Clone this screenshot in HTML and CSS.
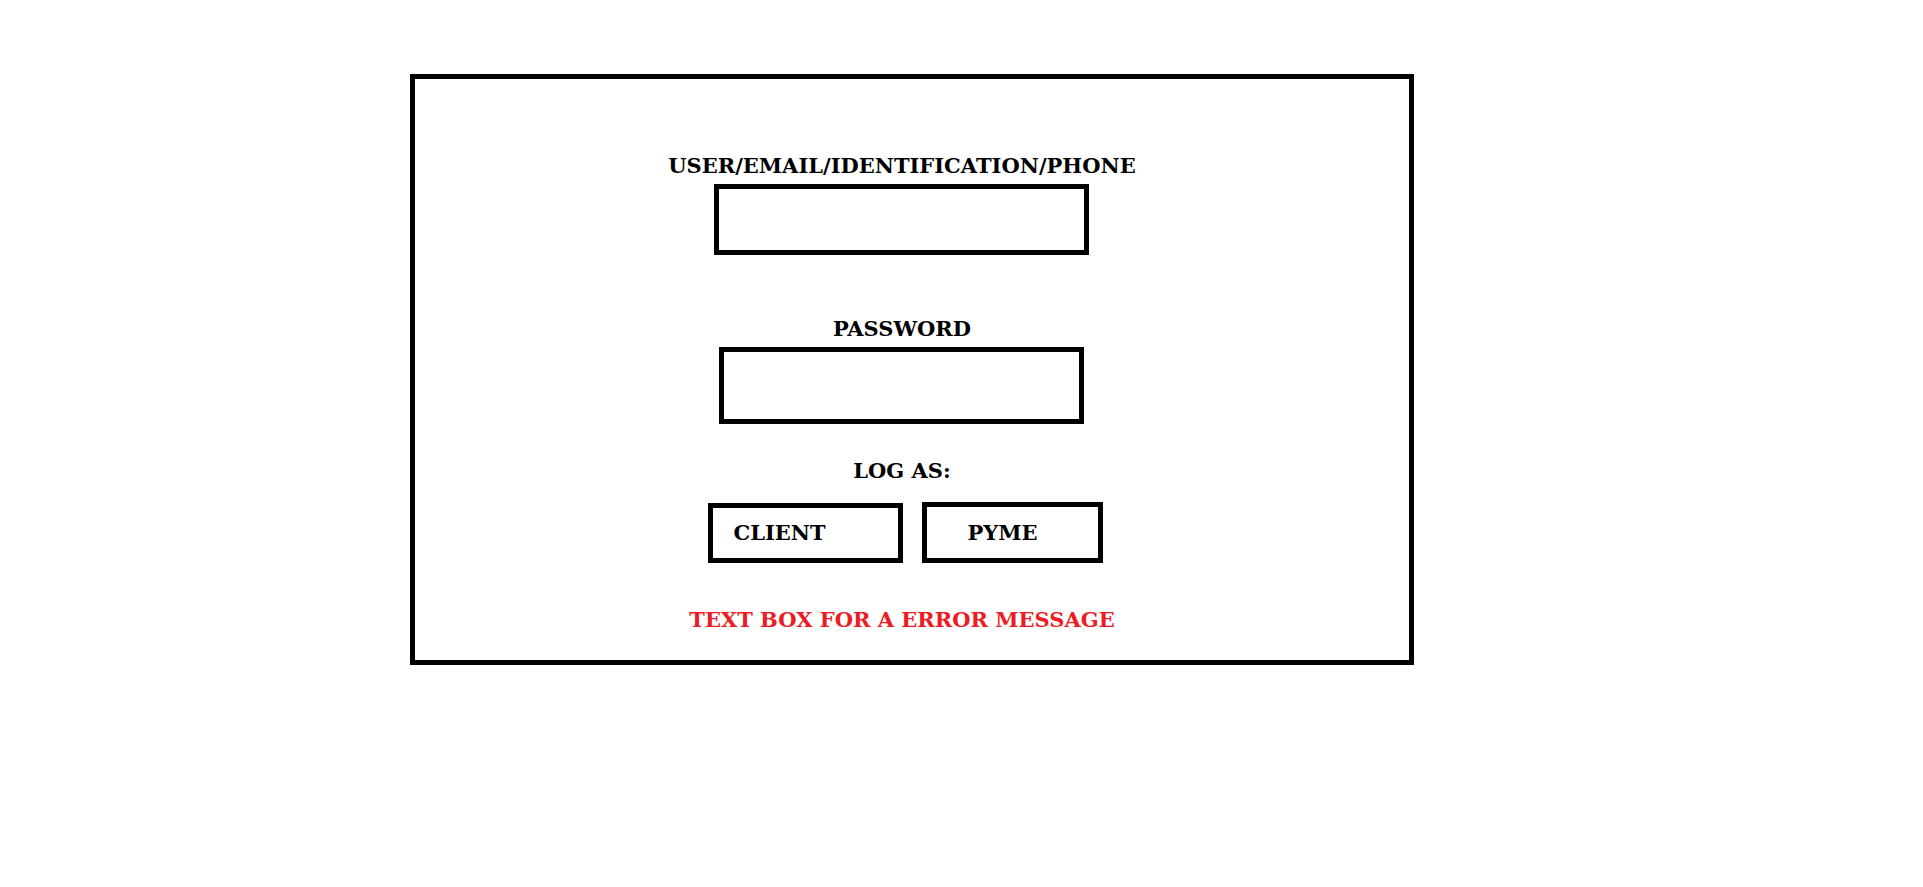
FILE: index.html
```html
<!DOCTYPE html>
<html lang="en">
<head>
<meta charset="utf-8">
<title>Log in</title>
<link rel="stylesheet" href="styles.css">
</head>
<body>
<main class="panel">
  <form class="login">
    <div class="field">
      <label for="user">USER/EMAIL/IDENTIFICATION/PHONE</label>
      <input class="box user" id="user" type="text">
    </div>
    <div class="field">
      <label for="password">PASSWORD</label>
      <input class="box password" id="password" type="password">
    </div>
    <p class="caption">LOG AS:</p>
    <div class="roles">
      <button class="box client" type="button">CLIENT</button>
      <button class="box pyme" type="button">PYME</button>
    </div>
    <p class="error" role="alert">TEXT BOX FOR A ERROR MESSAGE</p>
  </form>
</main>
</body>
</html>
```
FILE: styles.css
```css
* {
  box-sizing: border-box;
}

body {
  margin: 0;
  background: #fff;
  color: #000;
  font: bold 21px/24px "DejaVu Serif", serif;
}

.panel {
  width: 52.25%;
  min-width: 600px;
  margin: 74px 0 0 21.3%;
  padding: 75px 20px 28px 0;
  border: 5px solid #000;
}

.login {
  display: flex;
  flex-direction: column;
  align-items: center;
}

.field {
  display: flex;
  flex-direction: column;
  align-items: center;
  gap: 6px;
  margin-bottom: 62px;
}

.field + .field {
  margin-bottom: 35px;
}

.box {
  border: 5px solid #000;
  border-radius: 0;
  background: #fff;
  color: inherit;
  font: inherit;
}

.user {
  width: 375px;
  height: 71px;
}

.password {
  width: 365px;
  height: 77px;
}

.caption,
.error {
  margin: 0;
}

.roles {
  display: flex;
  align-items: flex-end;
  gap: 19px;
  margin: 19px 0 45px;
  padding-left: 8px;
}

.client,
.pyme {
  text-align: left;
}

.client {
  width: 195px;
  height: 60px;
  padding: 0 20px;
}

.pyme {
  width: 181px;
  height: 61px;
  padding: 0 40px;
}

.error {
  color: #ed1c24;
}
```
